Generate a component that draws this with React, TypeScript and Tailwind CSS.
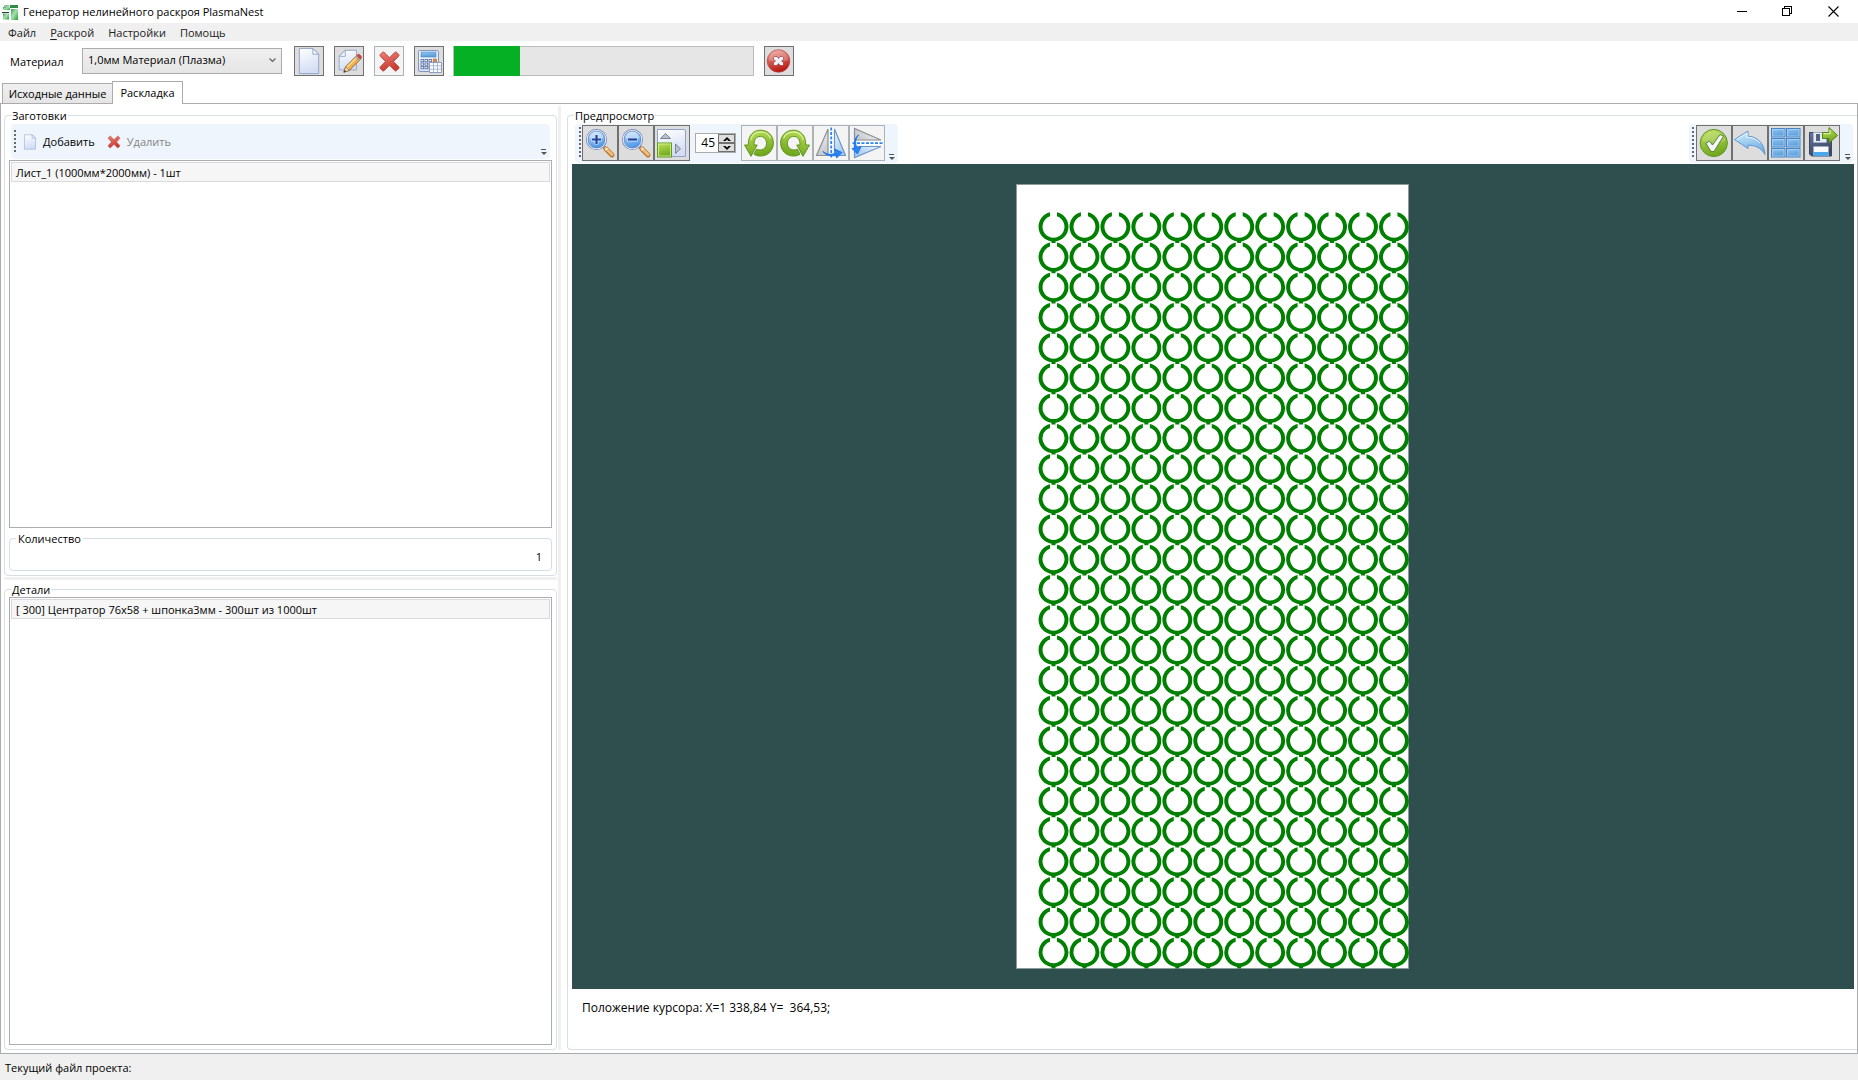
import React from "react";

const COLUMNS = 12;
const ROWS = 25;

function AppLogo() {
  return (
    <svg width="16" height="16" viewBox="0 0 16 16" aria-hidden="true">
      <defs>
        <linearGradient id="logo" x1="0" y1="0" x2="1" y2="1">
          <stop offset="0" stopColor="#3a9c58" />
          <stop offset="0.45" stopColor="#a8e0b0" />
          <stop offset="1" stopColor="#1fa038" />
        </linearGradient>
      </defs>
      <path d="M2 1h5v2H2z" fill="#8cc8a0" />
      <path d="M1 3h7v3H1z" fill="url(#logo)" />
      <path d="M0 8h7v1H0z" fill="#1c4a30" />
      <path d="M1 9.500h6v6H1z" fill="url(#logo)" />
      <path d="M8 1h8v3H8z" fill="#2f8a4c" />
      <path d="M9 5h7v11H9z" fill="url(#logo)" />
    </svg>
  );
}

function PageShape() {
  return (
    <>
      <path d="M5.500 2.500h14l6 6v20h-20z" fill="url(#paper)" stroke="#93a5c8" />
      <path d="M19.500 2.500v6h6z" fill="#f4f8ff" stroke="#93a5c8" strokeLinejoin="round" />
    </>
  );
}

function PageIcon({ size }: { size: number }) {
  return (
    <svg width={size} height={size} viewBox="1 1 29 29" aria-hidden="true">
      <PageShape />
    </svg>
  );
}

function EditIcon() {
  return (
    <svg width="28" height="28" viewBox="0 0 30 30" aria-hidden="true">
      <path d="M11 3.500h12v21H4.500v-15z" fill="url(#paper)" stroke="#93a5c8" />
      <path d="M11 3.500v6.500H4.500z" fill="#f4f8ff" stroke="#93a5c8" strokeLinejoin="round" />
      <path d="M9.500 27l2-6L22 10.500l4 3.800L15.500 25z" fill="#f3b04a" stroke="#8a5a1e" strokeWidth="0.900" />
      <path d="M12.500 22L23 11.500" stroke="#ffe0a0" strokeWidth="1.400" />
      <path d="M9.500 27l2-6 4 4z" fill="#f6dcb8" stroke="#7a5a38" strokeWidth="0.700" />
      <path d="M9.500 27l.8-2.400 1.600 1.600z" fill="#333" />
      <path d="M22 10.500l1.300-1.300 4 3.800-1.300 1.300z" fill="#b9bfca" stroke="#7a7f8c" strokeWidth="0.600" />
      <path d="M23.300 9.200l1.200-1.100q1-.7 2 .2l1.400 1.400q.9 1 .2 2L27.300 13z" fill="#d84a3a" stroke="#9c2a20" strokeWidth="0.600" />
    </svg>
  );
}

function CrossIcon({ size }: { size: number }) {
  return (
    <svg width={size} height={size} viewBox="0 0 24 24" aria-hidden="true">
      <path
        d="M4.500 2.500q1-1 2 0L12 8l5.500-5.500q1-1 2 0l2 2q1 1 0 2L16.200 12l5.300 5.500q1 1 0 2l-2 2q-1 1-2 0L12 16l-5.500 5.500q-1 1-2 0l-2-2q-1-1 0-2L7.800 12 2.500 6.500q-1-1 0-2z"
        fill="url(#red)"
        stroke="#a8342c"
        strokeWidth="0.800"
      />
    </svg>
  );
}

function CalcIcon() {
  return (
    <svg width="28" height="28" viewBox="0 0 28 28" aria-hidden="true">
      <rect x="3.500" y="3.500" width="20" height="21" rx="1.500" fill="url(#paper)" stroke="#8497bf" />
      <rect x="6" y="5" width="15" height="5" fill="url(#blue)" stroke="#4a86c4" strokeWidth="0.600" />
      {[6, 10, 14].map((x) =>
        [12.5, 16, 19.5].map((y) => (
          <rect key={`${x}-${y}`} x={x} y={y} width="2.600" height="2.200" fill="#fff" stroke="#6478a8" strokeWidth="0.900" />
        )),
      )}
      <rect x="18.500" y="12" width="3" height="3" fill="#e8893a" stroke="#a85a1c" strokeWidth="0.500" />
      <path d="M14.500 15.500h12v10h-12z" fill="#fff" stroke="#8a9cc4" />
      <path d="M14.500 18.800h12M14.500 22.200h12M18.500 15.500v10M22.500 15.500v10" stroke="#a9b7d6" fill="none" />
    </svg>
  );
}

function StopIcon() {
  return (
    <svg width="28" height="28" viewBox="0 0 28 28" aria-hidden="true">
      <circle cx="13.500" cy="14" r="11.300" fill="url(#stop)" stroke="#b0443c" strokeWidth="0.700" />
      <path d="M3.500 13a10 10 0 0 1 20 0q-10 3.500-20 0z" fill="#fff" opacity="0.220" />
      <path
        d="M9.500 9.500h2.500l1.500 2 1.500-2h2.500l1 1v2l-2 1.500 2 1.500v2l-1 1H15l-1.500-2-1.500 2H9.500l-1-1v-2l2-1.500-2-1.500v-2z"
        fill="#eef2fa"
        stroke="#8c2a28"
        strokeWidth="0.600"
      />
    </svg>
  );
}

function MagnifierIcon({ plus = false }: { plus?: boolean }) {
  return (
    <svg width="34" height="34" viewBox="0 0 34 34" aria-hidden="true">
      <path d="M20.500 20.500l3 3" stroke="#8a93a4" strokeWidth="3" />
      <path d="M22.800 22.800l6.200 6.200" stroke="#b5793a" strokeWidth="5" strokeLinecap="round" />
      <path d="M22.800 22.300l6.200 6.200" stroke="#f2bd7a" strokeWidth="3" strokeLinecap="round" />
      <path d="M22.400 24.400l2-2" stroke="#fff" strokeWidth="1.200" />
      <circle cx="13.500" cy="13.500" r="9.300" fill="url(#lens)" stroke="#6780b4" strokeWidth="2.400" />
      <circle cx="13.500" cy="13.500" r="9.300" fill="none" stroke="#dce8fa" strokeWidth="1.100" />
      <path d="M6.500 12.500a7 7 0 0 1 14 0q-7-2.500-14 0z" fill="#fff" opacity="0.400" />
      <path d={plus ? "M8.500 13.500h10M13.500 8.500v10" : "M8.500 13.500h10"} stroke="#dbe9ff" strokeWidth="4" />
      <path d={plus ? "M9 13.500h9M13.500 9v9" : "M9 13.500h9"} stroke="#20449c" strokeWidth="2.200" />
    </svg>
  );
}

function AlignIcon() {
  return (
    <svg width="34" height="34" viewBox="0 0 34 34" aria-hidden="true">
      <path d="M2.500 3.500h26.500q1.500 0 1.500 1.500v25.500H2.500z" fill="url(#paper)" stroke="#8ea2cc" />
      <rect x="2.500" y="17" width="14" height="14" fill="url(#green)" stroke="#5d9a1e" />
      <rect x="3.500" y="18" width="12" height="12" fill="none" stroke="#d5f09c" strokeWidth="0.800" />
      <path d="M5.500 12.500l5-5 5 5z" fill="#b9c1cd" stroke="#7a8494" />
      <path d="M20.500 18v9.500l5-4.700z" fill="#b9c1cd" stroke="#7a8494" />
    </svg>
  );
}

function RotateIcon({ clockwise = false }: { clockwise?: boolean }) {
  return (
    <svg width="34" height="34" viewBox="0 0 34 34" aria-hidden="true">
      <g transform={clockwise ? "translate(34 0) scale(-1 1)" : undefined}>
        <path
          d="M2.500 19h3.800C6 9.500 11.500 4 19 4.200c7.500.3 12.500 6 12.400 13C31.200 24.500 26 30 18.500 30c-2.600 0-4.800-.7-6.500-1.800l2.600-5c5 2.300 10-.9 10-5.800 0-4-2.900-7-6.300-7-4.100 0-6.500 3.300-6.300 8.600h3.200L9 30.300z"
          fill="url(#green)"
          stroke="#5f9420"
          strokeLinejoin="round"
        />
        <path d="M8.500 14c1.300-5 5.500-8 10-8 5 0 8.600 2.600 10 6.500" fill="none" stroke="#e2f6ac" strokeWidth="1.300" opacity="0.800" />
      </g>
    </svg>
  );
}

function MirrorIcon({ vertical = false }: { vertical?: boolean }) {
  return (
    <svg width="34" height="34" viewBox="0 0 34 34" aria-hidden="true">
      <g transform={vertical ? "translate(34 0) rotate(90)" : undefined}>
        <path d="M14 3v26.500H2.500z" fill="url(#mirrorGray)" stroke="#8c9096" strokeWidth="1.200" />
        <path d="M20.500 3v26.500h11z" fill="url(#mirrorBlue)" stroke="#6d96c8" strokeWidth="1.200" />
        <path d="M17.200 1.500v31" stroke="#fff" strokeWidth="4" />
        <path d="M17.200 1.500v31" stroke="#2a84f4" strokeWidth="1.800" strokeDasharray="3 1.500" />
        <path d="M9 25.500c4 3.500 9 3.500 13 1.500l-1.500-4 7.500 3.500-5.500 5.500-.3-2.800c-5 1.500-10 .3-13.200-3.700z" fill="#2a84f4" stroke="#1c74ec" />
      </g>
    </svg>
  );
}

function AcceptIcon() {
  return (
    <svg width="34" height="34" viewBox="0 0 34 34" aria-hidden="true">
      <circle cx="16.800" cy="17" r="13.600" fill="url(#green)" stroke="#5d962a" />
      <path d="M5 15a12 12 0 0 1 23.600 0q-12 4-23.600 0z" fill="#fff" opacity="0.180" />
      <path d="M9 17.500l3.500-2.500 3 4 7.500-10.500 3.500 1.700-9.500 15.300H14z" fill="#f3f5fa" stroke="#4c7a26" strokeWidth="0.900" strokeLinejoin="round" />
    </svg>
  );
}

function UndoIcon() {
  return (
    <svg width="34" height="34" viewBox="0 0 34 34" aria-hidden="true">
      <path
        d="M1.500 13.500L15 5v5.200c8.500.2 16.500 6.500 17 18.300-4-6.500-9-9.300-17-9.300v3.300z"
        fill="url(#undo)"
        stroke="#5f98ce"
        strokeLinejoin="round"
      />
      <path d="M3.800 13.500L14 7v4.300c5 0 10 2 13 6" fill="none" stroke="#f2faff" strokeWidth="0.900" />
    </svg>
  );
}

function GridIcon() {
  return (
    <svg width="34" height="34" viewBox="0 0 34 34" aria-hidden="true">
      {[2.5, 17.5].map((x) =>
        [2.5, 12.5, 22.5].map((y) => (
          <g key={`${x}-${y}`}>
            <rect x={x} y={y} width="13.500" height="8.500" fill="url(#blue)" stroke="#4685c4" />
            <rect x={x + 1} y={y + 1} width="11.500" height="6.500" fill="none" stroke="#acd3f5" strokeWidth="0.800" />
          </g>
        )),
      )}
    </svg>
  );
}

function SaveIcon() {
  return (
    <svg width="34" height="34" viewBox="0 0 34 34" aria-hidden="true">
      <path d="M4.500 6.500h22v23.500H6.500l-2-2z" fill="url(#disk)" stroke="#3c4766" />
      <rect x="8.500" y="6.500" width="13" height="10" fill="#e7edf8" stroke="#a5b2cd" strokeWidth="0.600" />
      <rect x="11" y="8" width="4" height="7" fill="#56617f" />
      <rect x="8.500" y="20.500" width="15" height="9.500" fill="#f8fbff" />
      <rect x="8.500" y="26" width="15" height="4" fill="#4aa8ea" />
      <path d="M17.500 6.500h6.500V1.500L32.500 9.500 24 17v-4.500h-6.500z" fill="url(#green)" stroke="#4f8518" strokeLinejoin="round" />
      <path d="M18.500 7.700h6.500V4" stroke="#e6fab0" fill="none" />
    </svg>
  );
}

function Gradients() {
  const stops: [string, string, string][] = [
    ["paper", "#ffffff", "#d3def4"],
    ["red", "#ee8277", "#c93a30"],
    ["blue", "#94c8f0", "#5a9cda"],
    ["stop", "#f0a096", "#b81c14"],
    ["lens", "#c4e2fc", "#4c98ea"],
    ["green", "#bfe35c", "#72a81e"],
    ["undo", "#d4effc", "#74b0e4"],
    ["disk", "#68769a", "#3e4866"],
    ["mirrorGray", "#fafafa", "#c8cacd"],
    ["mirrorBlue", "#f2f8fe", "#a8cdf0"],
  ];
  return (
    <svg width="0" height="0" className="absolute" aria-hidden="true">
      <defs>
        {stops.map(([id, from, to]) => (
          <linearGradient key={id} id={id} x1="0" y1="0" x2="0.300" y2="1">
            <stop offset="0" stopColor={from} />
            <stop offset="1" stopColor={to} />
          </linearGradient>
        ))}
      </defs>
    </svg>
  );
}

function SquareButton({ label, disabled = false, children }: { label: string; disabled?: boolean; children: React.ReactNode }) {
  return (
    <button
      aria-label={label}
      disabled={disabled}
      className="flex size-[30px] shrink-0 items-center justify-center border border-[#707070] bg-[#dddddd] disabled:border-[#adb2b5] disabled:bg-[#f4f4f4]"
    >
      {children}
    </button>
  );
}

function ToolButton({ label, disabled = false, children }: { label: string; disabled?: boolean; children: React.ReactNode }) {
  return (
    <button
      aria-label={label}
      disabled={disabled}
      className="flex size-9 shrink-0 items-center justify-center border border-[#707070] bg-[#dddddd] disabled:border-[#adb2b5] disabled:bg-[#f4f4f4]"
    >
      {children}
    </button>
  );
}

function Grip({ dots }: { dots: number }) {
  return (
    <svg width="2" height={dots * 4} viewBox={`0 0 2 ${dots * 4}`} shapeRendering="crispEdges" aria-hidden="true">
      {Array.from({ length: dots }, (_, i) => (
        <rect key={i} x="0" y={i * 4} width="2" height="2" fill="#6a6a6a" />
      ))}
    </svg>
  );
}

function Overflow() {
  return (
    <button aria-label="Дополнительные кнопки" className="self-end">
      <svg width="6" height="7" viewBox="0 0 6 7" aria-hidden="true">
        <path d="M0 0h5v1H0z" fill="#555" />
        <path d="M0 3h6L3 6z" fill="#555" />
      </svg>
    </button>
  );
}

function ListBox({ label, items, className }: { label: string; items: string[]; className: string }) {
  return (
    <div role="listbox" aria-label={label} className={`border border-[#abadb3] bg-white p-px ${className}`}>
      {items.map((item) => (
        <div key={item} role="option" aria-selected="true" className="h-5 truncate border border-[#dadada] bg-[#f6f6f6] px-1 leading-5">
          {item}
        </div>
      ))}
    </div>
  );
}

function Sheet() {
  return (
    <svg viewBox="0 0 393 785" className="h-full max-w-full" role="img" aria-label="Раскладка деталей на листе">
      <defs>
        <path
          id="part"
          d="M3.500 -14.400A14.800 14.800 0 0 1 2 14.700V16.300H-2V14.700A14.800 14.800 0 0 1 -3.500 -14.400V-10.400A11 11 0 1 0 3.500 -10.400Z"
        />
      </defs>
      <rect x="0.500" y="0.500" width="392" height="784" fill="#fff" stroke="#8a9c9c" strokeWidth="1" />
      <g fill="#008000">
        {Array.from({ length: COLUMNS * ROWS }, (_, i) => (
          <use key={i} href="#part" x={37.5 + (i % COLUMNS) * 30.95} y={42.7 + Math.floor(i / COLUMNS) * 30.23} />
        ))}
      </g>
    </svg>
  );
}

export default function App() {
  return (
    <div className="flex h-screen flex-col overflow-hidden bg-white font-['Open_Sans','Noto_Sans',sans-serif] text-[11px] leading-4 text-black">
      <Gradients />
      <header className="flex h-[23px] shrink-0 items-center gap-[5px] pr-px pl-[2px]">
        <AppLogo />
        <h1 className="flex-1">Генератор нелинейного раскроя PlasmaNest</h1>
        <div className="flex h-full items-center">
          <button aria-label="Свернуть" className="flex w-[45px] justify-center">
            <svg width="11" height="11" viewBox="0 0 11 11" fill="none" stroke="#000" shapeRendering="crispEdges"><path d="M0 5.500h10" /></svg>
          </button>
          <button aria-label="Восстановить" className="flex w-[45px] justify-center">
            <svg width="11" height="11" viewBox="0 0 11 11" fill="none" stroke="#000" shapeRendering="crispEdges"><path d="M.5 2.500h7v7h-7zM2.500 2V.5h7v7H8" /></svg>
          </button>
          <button aria-label="Закрыть" className="flex w-[47px] justify-center">
            <svg width="11" height="11" viewBox="0 0 11 11" fill="none" stroke="#000" strokeWidth="1.100"><path d="M.5.5l10 10M10.500.5l-10 10" /></svg>
          </button>
        </div>
      </header>

      <nav className="flex h-[18px] shrink-0 items-center gap-[14px] bg-[#f0f0f0] pt-px pl-2 text-[#212121]">
        <button>Файл</button>
        <button><span className="underline underline-offset-2">Р</span>аскрой</button>
        <button>Настройки</button>
        <button>Помощь</button>
      </nav>

      <div className="flex h-10 shrink-0 items-center gap-[10px] pl-[10px]">
        <label htmlFor="material" className="w-[62px] pt-px">Материал</label>
        <div className="relative mr-[2px] w-[200px]">
          <select id="material" className="h-[26px] w-full appearance-none border border-[#acacac] bg-linear-to-b from-[#f0f0f0] to-[#e5e5e5] px-[5px] pb-[2px]">
            <option>1,0мм Материал (Плазма)</option>
          </select>
          <svg className="pointer-events-none absolute top-[10px] right-[6px]" width="7" height="5" viewBox="0 0 7 5" fill="none" stroke="#606060" strokeWidth="1.200"><path d="M.5.5l3 3 3-3" /></svg>
        </div>
        <SquareButton label="Новый"><PageIcon size={28} /></SquareButton>
        <SquareButton label="Изменить"><EditIcon /></SquareButton>
        <SquareButton label="Удалить материал" disabled><CrossIcon size={23} /></SquareButton>
        <SquareButton label="Рассчитать"><CalcIcon /></SquareButton>
        <div role="progressbar" aria-label="Ход раскроя" aria-valuenow={22} className="-ml-px h-[30px] w-[301px] border border-[#bcbcbc] bg-[#e6e6e6]">
          <div className="-my-px h-[30px] w-[22%] bg-[#06b025]" />
        </div>
        <SquareButton label="Остановить"><StopIcon /></SquareButton>
      </div>

      <div role="tablist" className="flex h-[22px] shrink-0 items-end pl-[2px]">
        <button role="tab" aria-selected="false" className="h-5 w-[111px] border border-b-0 border-[#acacac] bg-linear-to-b from-[#f0f0f0] to-[#e5e5e5] whitespace-nowrap">Исходные данные</button>
        <button role="tab" aria-selected="true" className="relative -mb-px -ml-px h-[23px] w-[71px] border border-b-0 border-[#acacac] bg-white pb-px">Раскладка</button>
      </div>

      <main className="flex min-h-0 flex-1 border border-[#acacac] pt-[2px] pb-[3px] pl-[3px]">
        <div className="flex w-[553px] shrink-0 flex-col">
          <fieldset className="mt-px min-w-0 shrink-0 rounded-[4px] border border-[#d5dfe5] px-1 pb-1">
            <legend className="ml-[2px] h-4 px-px leading-[18px]">Заготовки</legend>
            <div className="mx-[2px] mt-px flex h-[35px] items-center rounded-sm bg-[#eef5fd] p-[3px]">
              <Grip dots={6} />
              <button className="ml-[6px] flex items-center gap-[5px]"><PageIcon size={16} />Добавить</button>
              <button disabled className="ml-3 flex items-center gap-[6px] text-[#838383]"><CrossIcon size={14} />Удалить</button>
              <div className="flex flex-1 justify-end self-stretch"><Overflow /></div>
            </div>
            <ListBox label="Заготовки" items={["Лист_1 (1000мм*2000мм) - 1шт"]} className="mt-px h-[368px]" />
            <fieldset className="mt-[2px] min-w-0 rounded-[4px] border border-[#d5dfe5] px-[6px] pb-1">
              <legend className="h-4 px-[2px] leading-[18px]"><label htmlFor="quantity">Количество</label></legend>
              <input id="quantity" defaultValue="1" className="block h-5 w-full pr-[3px] text-right outline-none" />
            </fieldset>
          </fieldset>
          <div className="mt-px h-[3px] shrink-0 bg-[#f0f0f0]" />
          <fieldset className="mt-px flex min-h-0 min-w-0 flex-1 flex-col rounded-[4px] border border-[#d5dfe5] px-1 pb-1">
            <legend className="ml-[2px] h-4 px-px leading-[18px]">Детали</legend>
            <ListBox label="Детали" items={["[ 300] Центратор 76x58 + шпонка3мм - 300шт из 1000шт"]} className="min-h-0 flex-1" />
          </fieldset>
        </div>

        <div className="mx-px w-[3px] shrink-0 bg-[#f0f0f0]" />

        <fieldset className="mt-px ml-[5px] flex min-w-0 flex-1 flex-col rounded-l-[4px] border border-r-0 border-[#d5dfe5] pr-[3px] pl-1">
          <legend className="ml-[2px] h-4 px-px leading-[18px]">Предпросмотр</legend>
          <div className="mt-px mb-px flex h-[39px] shrink-0 justify-between pr-px pl-[3px]">
            <div className="flex items-center rounded-sm bg-[#eef5fd] pr-[3px] pb-px pl-1">
              <Grip dots={8} />
              <div className="ml-px flex">
                <ToolButton label="Увеличить"><MagnifierIcon plus /></ToolButton>
                <ToolButton label="Уменьшить"><MagnifierIcon /></ToolButton>
                <ToolButton label="Выравнивание"><AlignIcon /></ToolButton>
              </div>
              <div className="mx-[5px] flex h-5 w-[41px] border border-[#acacac] bg-white">
                <input aria-label="Угол поворота" defaultValue="45" className="w-[22px] min-w-0 pr-[3px] text-right text-[12px] outline-none" />
                <div className="flex flex-1 flex-col">
                  <button aria-label="Больше" className="flex flex-1 items-center justify-center border border-[#707070] bg-[#dddddd]">
                    <svg width="8" height="4" viewBox="0 0 8 4"><path d="M0 4l4-4 4 4H5.500L4 2.600 2.500 4z" /></svg>
                  </button>
                  <button aria-label="Меньше" className="flex flex-1 items-center justify-center border border-[#707070] bg-[#dddddd]">
                    <svg width="8" height="4" viewBox="0 0 8 4"><path d="M0 0l4 4 4-4H5.500L4 1.400 2.500 0z" /></svg>
                  </button>
                </div>
              </div>
              <div className="mr-1 flex">
                <ToolButton label="Повернуть влево" disabled><RotateIcon /></ToolButton>
                <ToolButton label="Повернуть вправо" disabled><RotateIcon clockwise /></ToolButton>
                <ToolButton label="Отразить по горизонтали" disabled><MirrorIcon /></ToolButton>
                <ToolButton label="Отразить по вертикали" disabled><MirrorIcon vertical /></ToolButton>
              </div>
              <div className="flex self-stretch pb-px"><Overflow /></div>
            </div>
            <div className="flex items-center rounded-sm bg-[#eef5fd] pr-[2px] pb-px pl-[3px]">
              <Grip dots={8} />
              <div className="mr-[5px] ml-[2px] flex">
                <ToolButton label="Применить"><AcceptIcon /></ToolButton>
                <ToolButton label="Отменить"><UndoIcon /></ToolButton>
                <ToolButton label="Сетка"><GridIcon /></ToolButton>
                <ToolButton label="Сохранить"><SaveIcon /></ToolButton>
              </div>
              <div className="flex self-stretch pb-px"><Overflow /></div>
            </div>
          </div>
          <div className="flex min-h-0 flex-1 items-center justify-center bg-[#2f4f4f] py-5 pr-[2px]">
            <Sheet />
          </div>
          <output className="h-[60px] shrink-0 px-[10px] pt-[11px] text-[12px] whitespace-pre">Положение курсора: X=1 338,84 Y=  364,53;</output>
        </fieldset>
      </main>

      <footer className="flex h-[26px] shrink-0 items-center bg-[#f0f0f0] pt-[2px] pl-[5px]">Текущий файл проекта:</footer>
    </div>
  );
}
